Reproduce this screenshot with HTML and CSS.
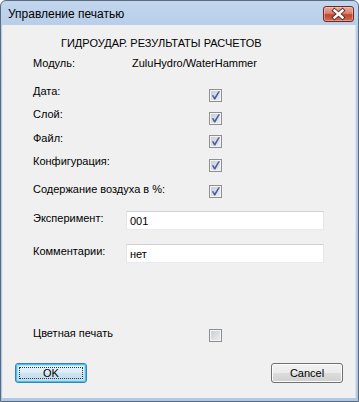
FILE: index.html
```html
<!DOCTYPE html>
<html lang="ru">
<head>
<meta charset="utf-8">
<title>Управление печатью</title>
<link rel="stylesheet" href="styles.css">
</head>
<body>
<div class="window">
  <div class="titlebar">
    <span class="title">Управление печатью</span>
    <div class="close">
      <svg width="31" height="16" viewBox="0 0 31 16">
        <path d="M11.5 4.5 L19.5 11.5 M19.5 4.5 L11.5 11.5" stroke="#5a2a22" stroke-width="4.2" stroke-linecap="square" fill="none"/>
        <path d="M11.5 4.5 L19.5 11.5 M19.5 4.5 L11.5 11.5" stroke="#ffffff" stroke-width="2.4" stroke-linecap="square" fill="none"/>
      </svg>
    </div>
  </div>
  <div class="client">
    <div class="heading">ГИДРОУДАР. РЕЗУЛЬТАТЫ РАСЧЕТОВ</div>
    <div class="row r-module"><span class="label lw-module">Модуль:</span><span class="value">ZuluHydro/WaterHammer</span></div>
    <div class="row r-date"><span class="label lw-check">Дата:</span><span class="cb checked o4"><svg viewBox="0 0 11 11" width="11" height="11"><path d="M1.8 5.2 L3.6 5.2 L4.6 7.2 L8.4 1.2 L10 1.2 L5.3 9.4 L4.1 9.4 Z" fill="#4a5ea6"/></svg></span></div>
    <div class="row r-layer"><span class="label lw-check">Слой:</span><span class="cb checked o4"><svg viewBox="0 0 11 11" width="11" height="11"><path d="M1.8 5.2 L3.6 5.2 L4.6 7.2 L8.4 1.2 L10 1.2 L5.3 9.4 L4.1 9.4 Z" fill="#4a5ea6"/></svg></span></div>
    <div class="row r-file"><span class="label lw-check">Файл:</span><span class="cb checked o3"><svg viewBox="0 0 11 11" width="11" height="11"><path d="M1.8 5.2 L3.6 5.2 L4.6 7.2 L8.4 1.2 L10 1.2 L5.3 9.4 L4.1 9.4 Z" fill="#4a5ea6"/></svg></span></div>
    <div class="row r-config"><span class="label lw-check">Конфигурация:</span><span class="cb checked o4"><svg viewBox="0 0 11 11" width="11" height="11"><path d="M1.8 5.2 L3.6 5.2 L4.6 7.2 L8.4 1.2 L10 1.2 L5.3 9.4 L4.1 9.4 Z" fill="#4a5ea6"/></svg></span></div>
    <div class="row r-air"><span class="label lw-check">Содержание воздуха в %:</span><span class="cb checked o2"><svg viewBox="0 0 11 11" width="11" height="11"><path d="M1.8 5.2 L3.6 5.2 L4.6 7.2 L8.4 1.2 L10 1.2 L5.3 9.4 L4.1 9.4 Z" fill="#4a5ea6"/></svg></span></div>
    <div class="row r-exp"><span class="label lw-input o1">Эксперимент:</span><input class="field" type="text" value="001"></div>
    <div class="row r-comm"><span class="label lw-input o1">Комментарии:</span><input class="field" type="text" value="нет"></div>
    <div class="row r-color"><span class="label lw-check">Цветная печать</span><span class="cb o2"></span></div>
    <div class="buttons">
      <button class="btn default"><span class="focus">OK</span></button>
      <button class="btn">Cancel</button>
    </div>
  </div>
</div>
</body>
</html>
```

FILE: styles.css
```css
html, body {
  margin: 0;
  padding: 0;
  background: #ffffff;
}

.window {
  box-sizing: border-box;
  width: 359px;
  height: 402px;
  border: 1px solid #5b6a7c;
  border-radius: 6px 6px 0 0;
  background: linear-gradient(#c2d6ed, #b6cde8 30px, #aec8e6 100%);
  display: flex;
  flex-direction: column;
  font-family: "Liberation Sans", Arial, sans-serif;
  font-size: 11px;
  color: #000;
  overflow: hidden;
}

.titlebar {
  height: 24px;
  flex: none;
  display: flex;
  align-items: flex-start;
  padding: 0 4px 0 7px;
}

.title {
  margin-top: 6px;
  font-size: 12px;
  line-height: 14px;
  color: #000;
}

.close {
  margin-left: auto;
  margin-top: 5px;
  width: 31px;
  height: 16px;
  box-sizing: border-box;
  border: 1px solid #6b2a22;
  border-radius: 3px;
  background: linear-gradient(#e9aba1, #d8806f 45%, #c3442f 55%, #d16a52 100%);
  box-shadow: inset 0 0 0 1px rgba(255, 220, 210, 0.45);
  display: flex;
  align-items: center;
  justify-content: center;
}

.close svg {
  display: block;
  margin: -1px;
}

.client {
  flex: 1;
  margin: 0 2px 3px 1px;
  background: #f0f0f0;
  border-left: 1px solid #e4ecf5;
  border-right: 1px solid #dbe5f0;
  display: flex;
  flex-direction: column;
  padding-left: 30px;
}

.heading {
  margin-top: 12px;
  margin-left: 28px;
  line-height: 13px;
  white-space: nowrap;
}

.row {
  display: flex;
  align-items: flex-start;
  line-height: 13px;
  white-space: nowrap;
}

.label {
  flex: none;
}

.lw-module { width: 99px; }
.lw-check { width: 176px; }
.lw-input { width: 93px; }

.o1 { margin-top: 1px; }
.o2 { margin-top: 2px; }
.o3 { margin-top: 3px; }
.o4 { margin-top: 4px; }

.r-module { margin-top: 7px; }
.r-date { margin-top: 15px; }
.r-layer { margin-top: 6px; }
.r-file { margin-top: 7px; }
.r-config { margin-top: 7px; }
.r-air { margin-top: 11px; }
.r-exp { margin-top: 13px; }
.r-comm { margin-top: 14px; }
.r-color { margin-top: 64px; }

.cb {
  box-sizing: border-box;
  width: 13px;
  height: 13px;
  border: 1px solid #8e8f8f;
  background: linear-gradient(135deg, #c9ccd2, #eeeff1);
  box-shadow: inset 0 0 0 1px #f4f4f4;
  display: block;
  flex: none;
}

.cb svg {
  display: block;
}

.field {
  box-sizing: border-box;
  width: 198px;
  height: 19px;
  margin: 0;
  padding: 0 3px;
  border: 1px solid;
  border-color: #cfd2d8 #e3e5ea #e8eaee #e3e5ea;
  background: #fff;
  font-family: "Liberation Sans", Arial, sans-serif;
  font-size: 11px;
  color: #000;
  outline: none;
}

.buttons {
  margin-top: 21px;
  display: flex;
  justify-content: space-between;
  margin-left: -18px;
  padding-right: 12px;
}

.btn {
  box-sizing: border-box;
  width: 72px;
  height: 20px;
  margin: 0;
  padding: 0;
  border: 1px solid #707070;
  border-radius: 3px;
  background: linear-gradient(#f2f2f2, #ebebeb 50%, #dddddd 50%, #cfcfcf);
  box-shadow: inset 0 0 0 1px #fcfcfc;
  font-family: "Liberation Sans", Arial, sans-serif;
  font-size: 11px;
  color: #000;
  display: flex;
  align-items: center;
  justify-content: center;
}

.btn.default {
  border-color: #3c7fb1;
  background: linear-gradient(#eaf4fa, #dcecf6 50%, #cde3f1 50%, #c0dbec);
  box-shadow: inset 0 0 0 1px #48c0f0, inset 0 0 0 2px #a8def6;
  position: relative;
}

.focus {
  position: absolute;
  left: 3px;
  top: 3px;
  right: 3px;
  bottom: 3px;
  border: 1px dotted #333;
  display: flex;
  align-items: center;
  justify-content: center;
}
```
